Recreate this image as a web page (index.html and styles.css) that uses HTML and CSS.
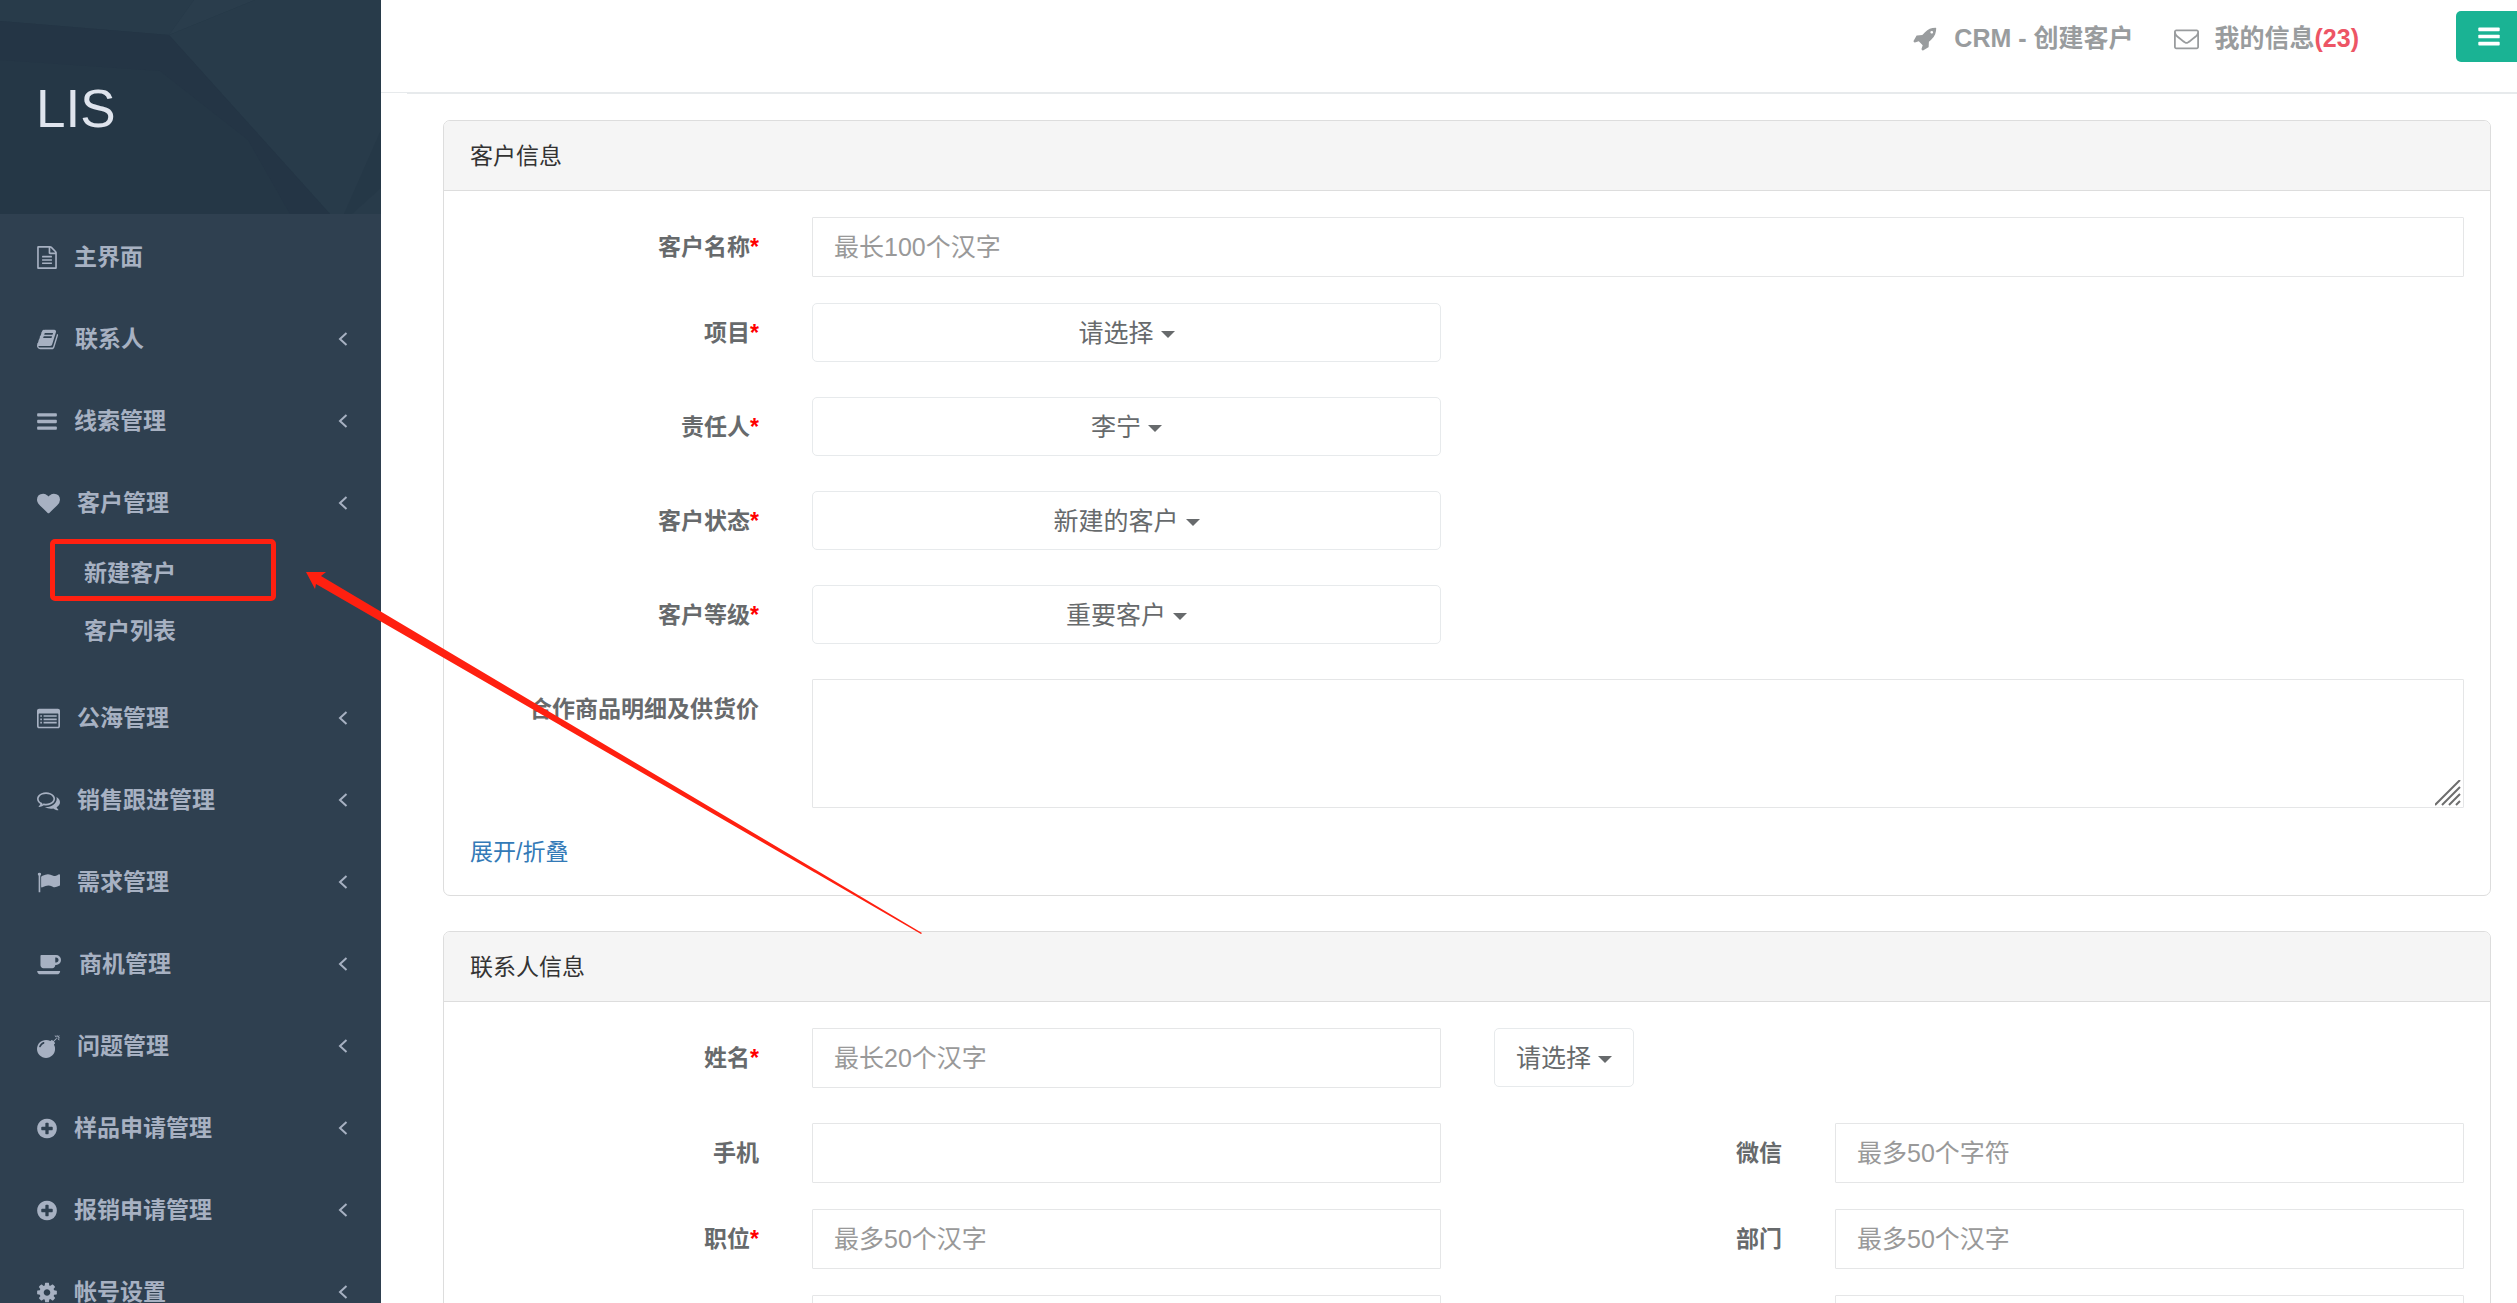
FILE: index.html
```html
<!DOCTYPE html>
<html lang="zh-CN">
<head>
<meta charset="utf-8">
<title>CRM - 创建客户</title>
<link rel="stylesheet" href="styles.css">
</head>
<body>
<svg class="sprite" aria-hidden="true">
  <symbol id="i-file" viewBox="128 0 1536 1792"><path d="M1596 380q28 28 48 76t20 88v1152q0 40-28 68t-68 28h-1344q-40 0-68-28t-28-68v-1600q0-40 28-68t68-28h896q40 0 88 20t76 48zm-444-244v376h376q-10-29-22-41l-313-313q-12-12-41-22zm384 1528v-1024h-416q-40 0-68-28t-28-68v-416h-768v1536h1280zm-1024-864q0-14 9-23t23-9h704q14 0 23 9t9 23v64q0 14-9 23t-23 9h-704q-14 0-23-9t-9-23v-64zm736 224q14 0 23 9t9 23v64q0 14-9 23t-23 9h-704q-14 0-23-9t-9-23v-64q0-14 9-23t23-9h704zm0 256q14 0 23 9t9 23v64q0 14-9 23t-23 9h-704q-14 0-23-9t-9-23v-64q0-14 9-23t23-9h704z"/></symbol>
  <symbol id="i-book" viewBox="64 0 1664 1792"><path d="M1703 478q40 57 18 129l-275 906q-19 64-76.500 107.500t-122.500 43.500h-923q-77 0-148.500-53.500t-99.500-131.500q-24-67-2-127 0-4 3-27t4-37q1-8-3-21.500t-3-19.500q2-11 8-21t16.500-23.500 16.500-23.500q23-38 45-91.500t30-91.500q3-10 .5-30t-.5-28q3-11 17-28t17-23q21-36 42-92t25-90q1-9-2.500-32t.5-28q4-13 22-30.500t22-22.500q19-26 42.500-84.500t27.500-96.500q1-8-3-25.500t-2-26.500q2-8 9-18t18-23 17-21q8-12 16.500-30.500t15-35 16-36 19.500-32 26.500-23.500 36-11.500 47.500 5.500l-1 3q38-9 51-9h761q74 0 114 56t18 130l-274 906q-36 119-71.500 153.500t-128.500 34.500h-869q-27 0-38 15-11 16-1 43 24 70 144 70h923q29 0 56-15.500t35-41.500l300-987q7-22 5-57 38 15 59 43zm-1064 2q-4 13 2 22.500t20 9.500h608q13 0 25.500-9.500t16.500-22.500l21-64q4-13-2-22.500t-20-9.500h-608q-13 0-25.500 9.500t-16.500 22.500zm-83 256q-4 13 2 22.500t20 9.500h608q13 0 25.500-9.500t16.500-22.500l21-64q4-13-2-22.500t-20-9.500h-608q-13 0-25.500 9.500t-16.500 22.500z"/></symbol>
  <symbol id="i-bars" viewBox="128 0 1536 1792"><rect x="128" y="256" width="1536" height="256" rx="64"/><rect x="128" y="768" width="1536" height="256" rx="64"/><rect x="128" y="1280" width="1536" height="256" rx="64"/></symbol>
  <symbol id="i-heart" viewBox="0 0 1792 1792"><path d="M896 1664q-26 0-44-18l-624-602q-10-8-27.500-26t-55.500-65.500-68-97.500-53.500-121-23.500-138q0-220 127-344t351-124q62 0 126.500 21.500t120 58 95.500 68.500 76 68q36-36 76-68t95.500-68.500 120-58 126.500-21.500q224 0 351 124t127 344q0 221-229 450l-623 600q-18 18-44 18z"/></symbol>
  <symbol id="i-list" viewBox="0 0 1792 1792"><path fill-rule="evenodd" d="M160 128h1472q66 0 113 47t47 113v1216q0 66-47 113t-113 47h-1472q-66 0-113-47t-47-113v-1216q0-66 47-113t113-47zM128 544v960q0 32 32 32h1472q32 0 32-32v-960q0-32-32-32h-1472q-32 0-32 32z"/><path d="M256 640h128v128h-128zM256 896h128v128h-128zM256 1152h128v128h-128zM512 640h1024v128h-1024zM512 896h1024v128h-1024zM512 1152h1024v128h-1024z"/></symbol>
  <symbol id="i-comments" viewBox="0 0 1792 1792"><path d="M704 384q-153 0-286 52t-211.500 141-78.500 191q0 82 53 158t149 132l97 56-35 84q34-20 62-39l44-31 53 10q78 14 153 14 153 0 286-52t211.500-141 78.500-191-78.500-191-211.500-141-286-52zm0-128q191 0 353.500 68.500t256.500 186.500 94 257-94 257-256.500 186.500-353.500 68.500q-86 0-176-16-124 88-278 128-36 9-86 16h-3q-11 0-20.500-8t-11.500-21q-1-3-1-6.500t.5-6.500 2-6l2.500-5 3.500-5.500 4-5 4.500-5 4-4.500q5-6 23-25t26-29.500 22.500-29 25-38.500 20.500-44q-124-72-195-177t-71-224q0-139 94-257t256.500-186.500 353.500-68.500zm822 1169q10 24 20.500 44t25 38.500 22.500 29 26 29.500 23 25q1 1 4 4.500t4.500 5 4 5 3.500 5.500l2.500 5 2 6 .5 6.500-1 6.500q-3 14-13 22t-22 7q-50-7-86-16-154-40-278-128-90 16-176 16-271 0-472-132 58 4 88 4 161 0 309-45t264-129q125-92 192-212t67-254q0-77-23-152 129 71 204 178t75 230q0 120-71 224.500t-195 176.500z"/></symbol>
  <symbol id="i-flag" viewBox="0 0 1792 1792"><path d="M320 256q0 72-64 110v1266q0 13-9.500 22.500t-22.500 9.500h-64q-13 0-22.500-9.500t-9.500-22.500v-1266q-64-38-64-110 0-53 37.500-90.500t90.500-37.500 90.500 37.500 37.500 90.500zm1472 64v763q0 25-12.500 38.500t-39.500 27.500q-215 116-369 116-61 0-123.500-22t-108.500-48-115.500-48-142.500-22q-192 0-464 146-17 9-33 9-26 0-45-19t-19-45v-742q0-32 31-55 21-14 79-43 236-120 421-120 107 0 200 29t219 88q38 19 88 19 54 0 117.500-21t110-47 88-47 54.500-21q26 0 45 19t19 45z"/></symbol>
  <symbol id="i-coffee" viewBox="0 0 1920 1792"><path d="M1664 544q0-80-56-136t-136-56h-64v384h64q80 0 136-56t56-136zm-1664 864h1792q0 106-75 181t-181 75h-1280q-106 0-181-75t-75-181zm1856-864q0 159-112.500 271.500t-271.500 112.500h-64v32q0 92-66 158t-158 66h-704q-92 0-158-66t-66-158v-736q0-26 19-45t45-19h1152q159 0 271.500 112.500t112.500 271.500z"/></symbol>
  <symbol id="i-bomb" viewBox="0 0 1792 1792"><path d="M571 589q-10-25-34-35t-49 0q-108 44-191 127t-127 191q-10 25 0 49t35 34q13 5 24 5 42 0 60-40 34-84 98.500-148.500t148.500-98.500q25-11 35-35t0-49zm942-356l46 46-244 243 68 68q19 19 19 45.500t-19 45.500l-64 64q89 161 89 343 0 143-55.500 273.500t-150 225-225 150-273.500 55.500-273.500-55.500-225-150-150-225-55.500-273.500 55.500-273.500 150-225 225-150 273.500-55.500q182 0 343 89l64-64q19-19 45.500-19t45.500 19l68 68zm8-56q-10 10-22 10-13 0-23-10l-91-90q-9-10-9-23t9-23q10-9 23-9t23 9l90 91q10 9 10 22.500t-10 22.500zm230 230q-11 9-23 9t-23-9l-90-91q-10-9-10-22.500t10-22.500q9-10 22.500-10t22.500 10l91 90q9 10 9 23t-9 23zm41-183q0 14-9 23t-23 9h-96q-14 0-23-9t-9-23 9-23 23-9h96q14 0 23 9t9 23zm-192-192v96q0 14-9 23t-23 9-23-9-9-23v-96q0-14 9-23t23-9 23 9 9 23zm151 55l-91 90q-10 10-22 10-13 0-23-10-10-9-10-22.500t10-22.500l90-91q10-9 23-9t23 9q9 10 9 23t-9 23z"/></symbol>
  <symbol id="i-plus" viewBox="128 0 1536 1792"><path d="M1344 960v-128q0-26-19-45t-45-19h-256v-256q0-26-19-45t-45-19h-128q-26 0-45 19t-19 45v256h-256q-26 0-45 19t-19 45v128q0 26 19 45t45 19h256v256q0 26 19 45t45 19h128q26 0 45-19t19-45v-256h256q26 0 45-19t19-45zm320-64q0 209-103 385.500t-279.500 279.500-385.500 103-385.500-103-279.500-279.500-103-385.500 103-385.500 279.500-279.500 385.500-103 385.500 103 279.500 279.500 103 385.500z"/></symbol>
  <symbol id="i-cog" viewBox="128 0 1536 1792"><path d="M1152 896q0-106-75-181t-181-75-181 75-75 181 75 181 181 75 181-75 75-181zm512-109v222q0 12-8 23t-20 13l-185 28q-19 54-39 91 35 50 107 138 10 12 10 25t-9 23q-27 37-99 108t-94 71q-12 0-26-9l-138-108q-44 23-91 38-16 136-29 186-7 28-36 28h-222q-14 0-24.500-8.500t-11.500-21.500l-28-184q-49-16-90-37l-141 107q-10 9-25 9-14 0-25-11-126-114-165-168-7-10-7-23 0-12 8-23 15-21 51-66.500t54-70.500q-27-50-41-99l-183-27q-13-2-21-12.500t-8-23.500v-222q0-12 8-23t19-13l186-28q14-46 39-92-40-57-107-138-10-12-10-24 0-10 9-23 26-36 98.500-107.500t94.500-71.500q13 0 26 10l138 107q44-23 91-38 16-136 29-186 7-28 36-28h222q14 0 24.500 8.500t11.500 21.500l28 184q49 16 90 37l142-107q9-9 24-9 13 0 25 10 129 119 165 170 7 8 7 22 0 12-8 23-15 21-51 66.500t-54 70.500q26 50 41 98l183 28q13 2 21 12.500t8 23.500z"/></symbol>
  <symbol id="i-envelope" viewBox="0 0 1792 1792"><path d="M1664 1504v-768q-32 36-69 66-268 206-426 338-51 43-83 67t-86.500 48.500-102.500 24.500h-2q-48 0-102.500-24.500t-86.500-48.500-83-67q-158-132-426-338-37-30-69-66v768q0 13 9.500 22.500t22.500 9.500h1472q13 0 22.500-9.500t9.500-22.500zm0-1051v-24.500l-.5-13-3-12.500-5.500-9-9-7.500-14-2.500h-1472q-13 0-22.500 9.500t-9.500 22.500q0 168 147 284 193 152 401 317 6 5 35 29.500t46 37.500 44.500 31.500 50.500 27.500 43 9h2q20 0 43-9t50.500-27.500 44.500-31.500 46-37.500 35-29.500q208-165 401-317 54-43 100.500-115.500t46.500-131.500zm128-37v1088q0 66-47 113t-113 47h-1472q-66 0-113-47t-47-113v-1088q0-66 47-113t113-47h1472q66 0 113 47t47 113z"/></symbol>
  <symbol id="i-rocket" viewBox="64 0 1664 1792"><path d="M1440 448q0-40-28-68t-68-28-68 28-28 68 28 68 68 28 68-28 28-68zm224-288q0 249-75.500 430.500t-253.500 360.500q-81 80-195 176l-20 379q-2 16-16 26l-384 224q-7 4-16 4-12 0-23-9l-64-64q-13-14-8-32l85-276-281-281-276 85q-3 1-9 1-14 0-23-9l-64-64q-17-19-5-39l224-384q10-14 26-16l379-20q96-114 176-195 188-187 358-258t431-71q14 0 24 9.500t10 22.500z"/></symbol>
  <symbol id="i-angle" viewBox="0 0 10 16"><path d="M8.500 2L2 8l6.500 6" fill="none" stroke="currentColor" stroke-width="2"/></symbol>
</svg>

<div class="app">
  <nav class="sidebar">
    <div class="brand">
      <svg class="brand-bg" viewBox="0 0 381 214" preserveAspectRatio="none" aria-hidden="true">
        <path fill="#283b4a" d="M0 0H194L169 35L0 21z"/>
        <path fill="#2a3d4c" d="M194 0H255L169 35z"/>
        <path fill="#283b4a" d="M255 0H381V214H330L169 35z"/>
        <path fill="#243545" d="M0 21L169 35L330 214H290L248 140L160 71L0 60z"/>
        <path fill="#253847" d="M381 130V188L352 214H344z"/>
      </svg>
      <h1>LIS</h1>
    </div>
    <ul class="menu">
      <li><a href="#"><svg class="ico ico-s"><use href="#i-file"/></svg><span>主界面</span></a></li>
      <li><a href="#"><svg class="ico ico-m"><use href="#i-book"/></svg><span>联系人</span><svg class="angle"><use href="#i-angle"/></svg></a></li>
      <li><a href="#"><svg class="ico ico-s"><use href="#i-bars"/></svg><span>线索管理</span><svg class="angle"><use href="#i-angle"/></svg></a></li>
      <li><a href="#"><svg class="ico"><use href="#i-heart"/></svg><span>客户管理</span><svg class="angle"><use href="#i-angle"/></svg></a>
        <ul class="submenu">
          <li class="marked"><a href="#">新建客户</a></li>
          <li><a href="#">客户列表</a></li>
        </ul>
      </li>
      <li><a href="#"><svg class="ico"><use href="#i-list"/></svg><span>公海管理</span><svg class="angle"><use href="#i-angle"/></svg></a></li>
      <li><a href="#"><svg class="ico"><use href="#i-comments"/></svg><span>销售跟进管理</span><svg class="angle"><use href="#i-angle"/></svg></a></li>
      <li><a href="#"><svg class="ico"><use href="#i-flag"/></svg><span>需求管理</span><svg class="angle"><use href="#i-angle"/></svg></a></li>
      <li><a href="#"><svg class="ico ico-l"><use href="#i-coffee"/></svg><span>商机管理</span><svg class="angle"><use href="#i-angle"/></svg></a></li>
      <li><a href="#"><svg class="ico"><use href="#i-bomb"/></svg><span>问题管理</span><svg class="angle"><use href="#i-angle"/></svg></a></li>
      <li><a href="#"><svg class="ico ico-s"><use href="#i-plus"/></svg><span>样品申请管理</span><svg class="angle"><use href="#i-angle"/></svg></a></li>
      <li><a href="#"><svg class="ico ico-s"><use href="#i-plus"/></svg><span>报销申请管理</span><svg class="angle"><use href="#i-angle"/></svg></a></li>
      <li><a href="#"><svg class="ico ico-s"><use href="#i-cog"/></svg><span>帐号设置</span><svg class="angle"><use href="#i-angle"/></svg></a></li>
    </ul>
  </nav>

  <main class="main">
    <header class="topbar">
      <a class="toplink" href="#"><svg class="topico"><use href="#i-rocket"/></svg><span>CRM - 创建客户</span></a>
      <a class="toplink" href="#"><svg class="topico"><use href="#i-envelope"/></svg><span>我的信息<b class="count">(23)</b></span></a>
      <button class="toggle" type="button" aria-label="菜单"><svg class="toggle-ico"><use href="#i-bars"/></svg></button>
    </header>

    <form class="content">
      <section class="panel">
        <h2 class="panel-title">客户信息</h2>
        <div class="panel-body">
          <div class="row">
            <label class="label" for="name">客户名称<i>*</i></label>
            <div class="wide"><input class="field" id="name" type="text" placeholder="最长100个汉字"></div>
          </div>
          <div class="row row-select">
            <label class="label" for="project">项目<i>*</i></label>
            <div class="half"><div class="picker"><select id="project"><option>请选择</option></select></div></div>
          </div>
          <div class="row row-select">
            <label class="label" for="owner">责任人<i>*</i></label>
            <div class="half"><div class="picker"><select id="owner"><option>李宁</option></select></div></div>
          </div>
          <div class="row row-select">
            <label class="label" for="status">客户状态<i>*</i></label>
            <div class="half"><div class="picker"><select id="status"><option>新建的客户</option></select></div></div>
          </div>
          <div class="row row-select">
            <label class="label" for="level">客户等级<i>*</i></label>
            <div class="half"><div class="picker"><select id="level"><option>重要客户</option></select></div></div>
          </div>
          <div class="row">
            <label class="label" for="goods">合作商品明细及供货价</label>
            <div class="wide area-wrap">
              <textarea class="field area" id="goods"></textarea>
              <svg class="grip" viewBox="0 0 26 26" aria-hidden="true"><path d="M0 25L25 0M7 25L25 7M14 25L25 14M21 25L25 21" fill="none" stroke="#6e6e6e" stroke-width="2"/></svg>
            </div>
          </div>
          <a class="fold" href="#">展开/折叠</a>
        </div>
      </section>

      <section class="panel">
        <h2 class="panel-title">联系人信息</h2>
        <div class="panel-body">
          <div class="row row-gap">
            <label class="label" for="contact">姓名<i>*</i></label>
            <div class="half"><input class="field" id="contact" type="text" placeholder="最长20个汉字"></div>
            <div class="half"><div class="picker picker-inline"><select aria-label="称呼"><option>请选择</option></select></div></div>
          </div>
          <div class="row">
            <label class="label" for="mobile">手机</label>
            <div class="half"><input class="field" id="mobile" type="text"></div>
            <label class="label" for="wechat">微信</label>
            <div class="half"><input class="field" id="wechat" type="text" placeholder="最多50个字符"></div>
          </div>
          <div class="row">
            <label class="label" for="post">职位<i>*</i></label>
            <div class="half"><input class="field" id="post" type="text" placeholder="最多50个汉字"></div>
            <label class="label" for="dept">部门</label>
            <div class="half"><input class="field" id="dept" type="text" placeholder="最多50个汉字"></div>
          </div>
          <div class="row">
            <div class="half half-first"><input class="field" type="text" aria-label="电话"></div>
            <div class="half half-second"><input class="field" type="text" aria-label="邮箱"></div>
          </div>
        </div>
      </section>
    </form>
  </main>

  <svg class="pointer" viewBox="0 0 616 362" aria-hidden="true"><path fill="#ff2010" d="M0 0H20L15 4L616 361L615 362L10 12L9 17z"/></svg>
</div>
</body>
</html>
```

FILE: styles.css
```css
*, *::before, *::after { box-sizing: border-box; }

body {
  margin: 0;
  background: #fff;
  color: #676a6c;
  font-family: "Liberation Sans", "Noto Sans CJK SC", sans-serif;
  font-size: 23px;
  line-height: 32px;
}

a { text-decoration: none; }
ul { margin: 0; padding: 0; list-style: none; }
svg { flex: none; fill: currentColor; }
.sprite { display: none; }

.app {
  position: relative;
  display: flex;
  height: 100vh;
  overflow: hidden;
}

/* Sidebar */
.sidebar {
  flex: none;
  width: 381px;
  overflow: auto;
  scrollbar-width: none;
  background: #2f4050;
}

.brand {
  position: relative;
  display: flex;
  align-items: center;
  height: 214px;
  padding: 4px 0 0 36px;
  background: #253746;
}
.brand-bg {
  position: absolute;
  inset: 0;
  width: 100%;
  height: 100%;
}
.brand h1 {
  position: relative;
  margin: 0;
  color: #dfe4ed;
  font-size: 53px;
  font-weight: 400;
  line-height: 60px;
}

.menu { padding-top: 2px; }
.menu a {
  display: flex;
  align-items: center;
  height: 82px;
  padding: 0 33px 0 37px;
  color: #a7b1c2;
  font-weight: 700;
}
.ico { width: 23px; height: 23px; margin-right: 17px; }
.ico-s { width: 20px; }
.ico-m { width: 21px; }
.ico-l { width: 25px; }
.angle { width: 10px; height: 16px; margin-left: auto; }

.submenu { padding-bottom: 17px; }
.submenu a { height: 58px; padding-left: 84px; }
.marked { position: relative; }
.marked::after {
  content: "";
  position: absolute;
  left: 50px;
  top: -5px;
  width: 226px;
  height: 62px;
  border: 5px solid #ff2010;
  border-radius: 5px;
}

/* Main column */
.main {
  flex: 1;
  min-width: 0;
  overflow: auto;
  scrollbar-width: none;
}

.topbar {
  display: flex;
  align-items: flex-start;
  justify-content: flex-end;
  height: 93px;
  padding-top: 11px;
  border-bottom: 1px solid #e7eaec;
}
.toplink {
  display: flex;
  align-items: center;
  height: 54px;
  margin-right: 40px;
  color: #999c9e;
  font-size: 25px;
  font-weight: 700;
}
.topico { width: 25px; height: 25px; margin-right: 16px; }
.count { color: #ed5565; }
.toggle {
  display: flex;
  align-items: center;
  width: 61px;
  height: 51px;
  margin-left: 57px;
  padding: 0 0 0 22px;
  border: 0;
  border-radius: 5px 0 0 5px;
  background: #1ab394;
  color: #fff;
}
.toggle-ico { width: 22px; height: 25px; }

.content {
  display: grid;
  gap: 35px;
  margin-left: 26px;
  padding: 26px 26px 35px 36px;
  border-top: 1px solid #e7eaec;
}

.panel {
  border: 1px solid #ddd;
  border-radius: 7px;
}
.panel-title {
  margin: 0;
  padding: 19px 26px 17px;
  border-bottom: 1px solid #ddd;
  border-radius: 6px 6px 0 0;
  background: #f5f5f5;
  color: #333;
  font-size: 23px;
  font-weight: 400;
  line-height: 33px;
}
.panel-body { padding: 26px 0; }

/* Form grid */
.row {
  display: grid;
  grid-template-columns: repeat(12, 1fr);
  align-items: start;
  margin-bottom: 26px;
}
.row-select, .row-gap { margin-bottom: 35px; }
.label {
  grid-column: span 2;
  padding: 14px 26px 0 0;
  font-weight: 700;
  text-align: right;
}
.label i { color: #f00; font-style: normal; }
.wide, .half { padding: 0 26px 0 27px; }
.wide { grid-column: span 10; }
.half { grid-column: span 4; }
.half-first { grid-column: 3 / span 4; }
.half-second { grid-column: 9 / span 4; }

.field {
  display: block;
  width: 100%;
  height: 60px;
  padding: 0 21px;
  border: 1px solid #e5e6e7;
  border-radius: 1px;
  background: #fff;
  color: inherit;
  font-family: inherit;
  font-size: 25px;
}
.field::placeholder { color: #999; opacity: 1; }

.area-wrap { position: relative; }
.area { height: 129px; resize: none; }
.grip {
  position: absolute;
  right: 29px;
  bottom: 2px;
  width: 26px;
  height: 26px;
}

.picker {
  display: flex;
  align-items: center;
  justify-content: center;
  gap: 6px;
  height: 59px;
  padding: 0 21px;
  border: 1px solid #e7eaec;
  border-radius: 5px;
}
.picker::after {
  content: "";
  margin-top: 3px;
  border: 7px solid transparent;
  border-top-color: #676a6c;
  border-bottom: 0;
}
.picker-inline { display: inline-flex; }
.picker select {
  appearance: none;
  padding: 0;
  border: 0;
  background: none;
  color: inherit;
  font-family: inherit;
  font-size: 25px;
}

.fold {
  display: block;
  width: fit-content;
  margin-left: 26px;
  padding: 2px 0 1px;
  color: #337ab7;
}

/* Arrow laid over the page */
.pointer {
  position: absolute;
  left: 306px;
  top: 572px;
  width: 616px;
  height: 362px;
  pointer-events: none;
}
```
